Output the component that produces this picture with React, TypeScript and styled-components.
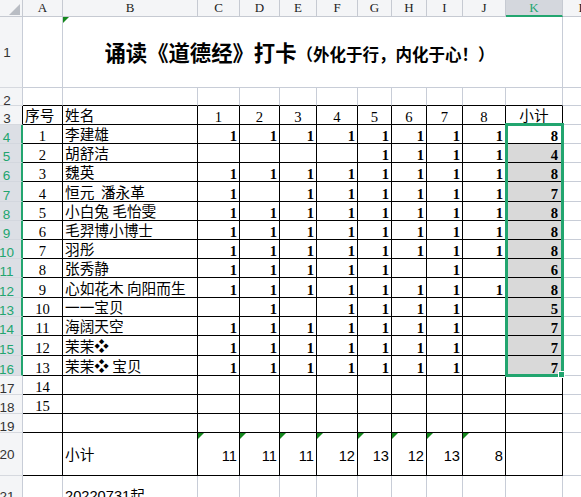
import React from 'react';
import styled, { createGlobalStyle, css } from 'styled-components';

const GRID = '#c8cdd7';
const HEAD_LINE = '#c6cad2';
const BLACK = '#000';
const GREEN = '#22a56f';

const COLS = [23, 40, 135, 42, 40, 37, 41, 34, 35, 36, 43, 57, 40];
const ROWS = [17, 71, 18, 19, 19, 19, 19, 20, 19, 19, 19, 19, 20, 19, 19, 20, 20, 19, 19, 19, 43, 40];
const LETTERS = ['A', 'B', 'C', 'D', 'E', 'F', 'G', 'H', 'I', 'J', 'K', 'L'];

const NAMES = [
  '李建雄',
  '胡舒洁',
  '魏英',
  '恒元  潘永革',
  '小白兔 毛怡雯',
  '毛羿博小博士',
  '羽彤',
  '张秀静',
  '心如花木 向阳而生',
  '一一宝贝',
  '海阔天空',
  '茉茉❖',
  '茉茉❖ 宝贝',
];
const MARKS = [
  '11111111',
  '00001111',
  '11111111',
  '10111111',
  '11111111',
  '11111111',
  '11111111',
  '11111010',
  '11111111',
  '01011110',
  '11111110',
  '11111110',
  '11111110',
];
const TOTALS = [0, 1, 2, 3, 4, 5, 6, 7].map((d) =>
  MARKS.reduce((s, m) => s + (m[d] === '1' ? 1 : 0), 0)
);

const GlobalStyle = createGlobalStyle`
  html, body { margin: 0; padding: 0; background: #fff; }
  body { font-family: "Noto Sans CJK SC", sans-serif; }
`;

const flagCss = css`
  &::before {
    content: '';
    position: absolute;
    left: 0;
    top: 0;
    border-style: solid;
    border-width: 6px 6px 0 0;
    border-color: #14871d transparent transparent transparent;
  }
`;

const Sheet = styled.div`
  position: relative;
  width: 581px;
  height: 497px;
  overflow: hidden;
  background: #fff;
  display: grid;
  grid-template-columns: ${COLS.map((w) => `${w}px`).join(' ')};
  grid-template-rows: ${ROWS.map((h) => `${h}px`).join(' ')};
`;

const Corner = styled.div`
  position: relative;
  box-sizing: border-box;
  background: #f4f5f7;
  border-right: 1px solid ${HEAD_LINE};
  border-bottom: 1px solid ${HEAD_LINE};
  &::after {
    content: '';
    position: absolute;
    right: 2px;
    bottom: 1px;
    border-style: solid;
    border-width: 0 0 11px 11px;
    border-color: transparent transparent #b9bdc4 transparent;
  }
`;

const ColHead = styled.div<{ $active?: boolean }>`
  box-sizing: border-box;
  background: ${(p) => (p.$active ? '#d4d7dd' : '#f4f5f7')};
  color: ${(p) => (p.$active ? GREEN : '#222')};
  border-right: 1px solid ${HEAD_LINE};
  border-bottom: ${(p) => (p.$active ? `2px solid ${GREEN}` : `1px solid ${HEAD_LINE}`)};
  display: flex;
  align-items: center;
  justify-content: center;
  font-family: "Liberation Serif", serif;
  font-size: 13px;
  line-height: 14px;
`;

const RowHead = styled.div<{ $active?: boolean; $edge: string; $tall?: boolean }>`
  box-sizing: border-box;
  background: ${(p) => (p.$active ? '#dcdfe5' : '#f4f5f7')};
  color: ${(p) => (p.$active ? GREEN : '#333')};
  border-bottom: 1px solid ${(p) => (p.$active ? '#d3d7de' : '#d6d9df')};
  border-right: ${(p) => (p.$active ? `2px solid ${GREEN}` : `1px solid ${p.$edge}`)};
  display: flex;
  align-items: center;
  justify-content: center;
  padding: ${(p) => (p.$tall ? '2px 8px 0 0' : '8px 8px 0 0')};
  font-family: "Liberation Sans", sans-serif;
  font-size: 13.5px;
  line-height: 14px;
`;

type Kind = 'cjk' | 'num' | 'bold' | 'sans' | 'mixed';
type Align = 'left' | 'center' | 'right';

const kindStyles: Record<Kind, ReturnType<typeof css>> = {
  cjk: css`
    font-family: "Noto Sans CJK SC", "DejaVu Sans", sans-serif;
    font-size: 14.67px;
    line-height: 18px;
  `,
  num: css`
    font-family: "Liberation Serif", serif;
    font-size: 14.67px;
    line-height: 13px;
  `,
  bold: css`
    font-family: "Liberation Serif", serif;
    font-weight: 700;
    font-size: 14.67px;
    line-height: 13px;
  `,
  sans: css`
    font-family: "Liberation Sans", sans-serif;
    font-size: 14.67px;
    line-height: 17px;
  `,
  mixed: css`
    font-family: "Liberation Sans", "Noto Sans CJK SC", sans-serif;
    font-size: 14.67px;
    line-height: 18px;
  `,
};

const Cell = styled.div<{
  $right: string;
  $bottom: string;
  $bg?: string;
  $align?: Align;
  $mid?: boolean;
  $kind?: Kind;
  $flag?: boolean;
  $pr?: number;
  $pt?: number;
}>`
  position: relative;
  box-sizing: border-box;
  min-width: 0;
  border-right: 1px solid ${(p) => p.$right};
  border-bottom: 1px solid ${(p) => p.$bottom};
  background: ${(p) => p.$bg ?? '#fff'};
  color: #000;
  display: flex;
  align-items: ${(p) => (p.$mid ? 'center' : 'flex-end')};
  justify-content: ${(p) =>
    p.$align === 'center' ? 'center' : p.$align === 'right' ? 'flex-end' : 'flex-start'};
  padding: ${(p) => p.$pt ?? 0}px ${(p) => p.$pr ?? 2}px 0 2px;
  white-space: pre;
  ${(p) => kindStyles[p.$kind ?? 'cjk']}
  ${(p) => p.$flag && flagCss}
`;

const TitleCell = styled.div`
  grid-column: 3 / 13;
  position: relative;
  box-sizing: border-box;
  border-right: 1px solid ${GRID};
  border-bottom: 1px solid ${GRID};
  display: flex;
  align-items: center;
  justify-content: center;
  padding: 0 26px 0 0;
  white-space: nowrap;
  ${flagCss}
`;

const TitleText = styled.span`
  font-family: "Noto Sans CJK SC", sans-serif;
  font-weight: 700;
  color: #000;
  line-height: 1.2;
`;

const Big = styled.span`
  font-size: 21.33px;
`;

const Small = styled.span`
  font-size: 16.5px;
`;

const Selection = styled.div`
  position: absolute;
  left: 505px;
  top: 123px;
  width: 59px;
  height: 254px;
  box-sizing: border-box;
  border: 3px solid ${GREEN};
  pointer-events: none;
`;

const Handle = styled.div`
  position: absolute;
  right: -4px;
  bottom: -4px;
  width: 5px;
  height: 5px;
  background: ${GREEN};
  border: 1px solid #fff;
`;

type CellContent = {
  text?: string;
  $kind?: Kind;
  $align?: Align;
  $mid?: boolean;
  $bg?: string;
  $flag?: boolean;
  $pr?: number;
  $pt?: number;
};

function contentFor(r: number, c: number): CellContent {
  if (r === 3) {
    if (c === 1) return { text: '序号', $kind: 'cjk', $align: 'left' };
    if (c === 2) return { text: '姓名', $kind: 'cjk', $align: 'left' };
    if (c >= 3 && c <= 10) return { text: String(c - 2), $kind: 'num', $align: 'center' };
    if (c === 11) return { text: '小计', $kind: 'cjk', $align: 'center' };
    return {};
  }
  if (r >= 4 && r <= 16) {
    const i = r - 4;
    if (c === 1) return { text: String(i + 1), $kind: 'num', $align: 'center' };
    if (c === 2) return { text: NAMES[i], $kind: 'cjk', $align: 'left' };
    if (c >= 3 && c <= 10)
      return { text: MARKS[i][c - 3] === '1' ? '1' : '', $kind: 'bold', $align: 'right' };
    if (c === 11) {
      const sum = MARKS[i].split('').filter((x) => x === '1').length;
      return {
        text: String(sum),
        $kind: 'bold',
        $align: 'right',
        $pr: 4,
        $bg: r >= 5 ? '#d9d9d9' : '#fff',
      };
    }
    return {};
  }
  if ((r === 17 || r === 18) && c === 1) {
    return { text: String(r - 3), $kind: 'num', $align: 'center' };
  }
  if (r === 20) {
    if (c === 2) return { text: '小计', $kind: 'cjk', $align: 'left', $mid: true };
    if (c >= 3 && c <= 10)
      return {
        text: String(TOTALS[c - 3]),
        $kind: 'sans',
        $align: 'right',
        $mid: true,
        $flag: true,
        $pt: 4,
      };
    return { $mid: true };
  }
  if (r === 21 && c === 2) {
    return { text: '20220731起', $kind: 'mixed', $align: 'left', $mid: true };
  }
  return {};
}

function bordersFor(r: number, c: number) {
  return {
    $right: r >= 3 && r <= 20 && c <= 11 ? BLACK : GRID,
    $bottom: r >= 2 && r <= 20 && c <= 11 ? BLACK : GRID,
  };
}

function renderRows() {
  const out: React.ReactNode[] = [];
  for (let r = 1; r <= 21; r++) {
    const active = r >= 4 && r <= 16;
    out.push(
      <RowHead key={`h${r}`} $active={active} $edge={r === 3 ? BLACK : GRID} $tall={r === 1 || r >= 20}>
        {r}
      </RowHead>
    );
    if (r === 1) {
      out.push(<Cell key="a1" $right={GRID} $bottom={GRID} />);
      out.push(
        <TitleCell key="title">
          <TitleText>
            <Big>诵读《道德经》打卡</Big>
            <Small>（外化于行，内化于心！）</Small>
          </TitleText>
        </TitleCell>
      );
      out.push(<Cell key="l1" $right={GRID} $bottom={GRID} />);
      continue;
    }
    for (let c = 1; c <= 12; c++) {
      const { text, ...rest } = contentFor(r, c);
      out.push(
        <Cell key={`${r}-${c}`} {...bordersFor(r, c)} {...rest}>
          {text}
        </Cell>
      );
    }
  }
  return out;
}

export default function App() {
  return (
    <>
      <GlobalStyle />
      <Sheet>
        <Corner />
        {LETTERS.map((l) => (
          <ColHead key={l} $active={l === 'K'}>
            {l}
          </ColHead>
        ))}
        {renderRows()}
        <Selection>
          <Handle />
        </Selection>
      </Sheet>
    </>
  );
}
